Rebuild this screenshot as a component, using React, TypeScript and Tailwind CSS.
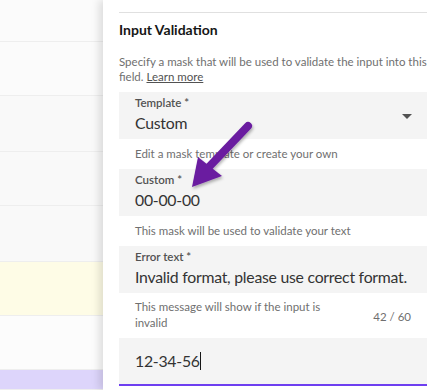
import React from "react";

function Field({ label, value, children }: { label: string; value: string; children?: React.ReactNode }) {
  return (
    <div className="relative bg-[#f4f4f4] h-[47px] px-4 pt-[4px] flex flex-col">
      <div className="text-[11.5px] leading-[14px] text-[#525252] font-semibold">{label}</div>
      <div className="mt-[3px] text-[15.8px] leading-[20px] tracking-[-0.25px] text-[#333333] whitespace-nowrap">{value}</div>
      {children}
    </div>
  );
}

export default function App() {
  const rows = [
    "h-[43px] bg-[#fbfbfb]",
    "h-[55px] bg-[#fbfbfb]",
    "h-[57px] bg-[#f9f9f9]",
    "h-[55px] bg-[#f9f9f9]",
    "h-[57px] bg-[#f9f9f9]",
    "h-[55px] bg-[#fefce6]",
    "h-[56px] bg-[#fcfcfc]",
    "h-[20px] bg-[#ddd5fb]",
  ];
  return (
    <div
      className="relative w-[440px] h-[390px] overflow-hidden flex bg-white"
      style={{ fontFamily: "Lato, 'Open Sans', sans-serif" }}
    >
      <div className="w-[103px] shrink-0 flex flex-col">
        {rows.map((r, i) => (
          <div key={i} className={`${r} border-b border-[#eeeeee]`} />
        ))}
      </div>
      <div className="relative flex-1 bg-white shadow-[-4px_0_8px_rgba(0,0,0,0.12)] pl-4 pr-[13px] flex flex-col">
        <div className="mt-[12px] border-t border-[#e0e0e0]" />
        <div className="mt-[9px] text-[14px] leading-[16px] font-bold text-[#161616]">Input Validation</div>
        <p className="mt-[16px] text-[11.5px] leading-[15px] text-[#6f6f6f]">
          Specify a mask that will be used to validate the input into this field.{" "}
          <span className="underline text-[#525252]">Learn more</span>
        </p>
        <div className="mt-[8px]">
          <Field label="Template *" value="Custom">
            <svg className="absolute right-[15px] top-[22px]" width="10" height="5" viewBox="0 0 10 5">
              <path d="M0 0 L10 0 L5 5 Z" fill="#525252" />
            </svg>
          </Field>
        </div>
        <div className="mt-[8px] text-[11.5px] leading-[14px] text-[#6f6f6f] pl-4">
          Edit a mask template or create your own
        </div>
        <div className="mt-[8px]">
          <Field label="Custom *" value="00-00-00" />
        </div>
        <div className="mt-[8px] text-[11.5px] leading-[14px] text-[#6f6f6f] pl-4">
          This mask will be used to validate your text
        </div>
        <div className="mt-[8px]">
          <Field label="Error text *" value="Invalid format, please use correct format." />
        </div>
        <div className="mt-[6px] flex items-center justify-between pl-4 pr-4">
          <div className="w-[200px] text-[11.5px] leading-[16px] text-[#6f6f6f]">
            This message will show if the input is invalid
          </div>
          <div className="mt-[4px] text-[11.5px] leading-[16px] text-[#6f6f6f]">42 / 60</div>
        </div>
        <div className="mt-[7px] bg-[#f4f4f4] h-[48px] border-b-2 border-[#6e3ff0] px-4 flex items-center">
          <span className="text-[15.8px] leading-[20px] tracking-[-0.25px] text-[#333333]">12-34-56</span>
          <span className="w-[1px] h-[18px] bg-[#161616]" />
        </div>
      </div>
      <svg
        className="absolute left-0 top-0 pointer-events-none"
        width="440"
        height="390"
        viewBox="0 0 440 390"
      >
        <defs>
          <filter id="sh" x="-20%" y="-20%" width="140%" height="140%">
            <feDropShadow dx="1" dy="2" stdDeviation="1.5" floodColor="#000" floodOpacity="0.3" />
          </filter>
        </defs>
        <g filter="url(#sh)">
          <line x1="248" y1="126" x2="207" y2="169" stroke="#6a1fa0" strokeWidth="8" strokeLinecap="round" />
          <polygon points="192,187 198,157 222,176" fill="#6a1fa0" />
        </g>
      </svg>
    </div>
  );
}
